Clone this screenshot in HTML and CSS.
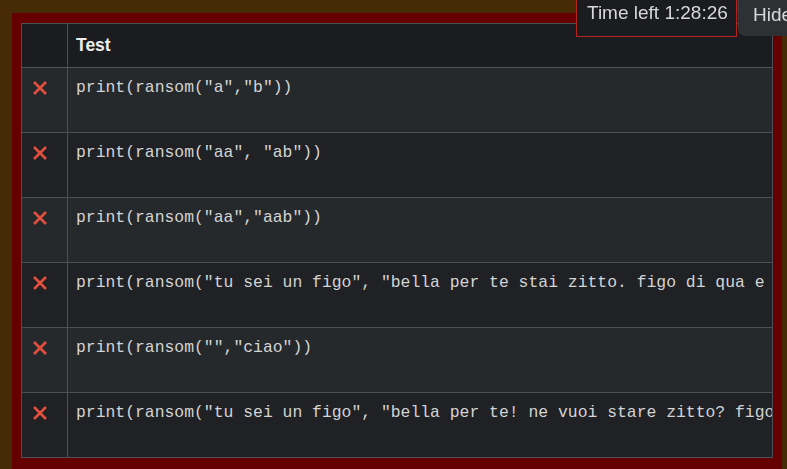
FILE: index.html
```html
<!DOCTYPE html>
<html>
<head>
<meta charset="utf-8">
<link rel="stylesheet" href="styles.css">
</head>
<body>
<div class="frame">
  <div class="table-wrap">
    <table class="results">
      <thead>
        <tr><th class="status"></th><th>Test</th></tr>
      </thead>
      <tbody>
        <tr><td class="status"><svg class="x" viewBox="0 0 16 16"><path d="M2 2L14 14M14 2L2 14"/></svg></td><td class="code">print(ransom("a","b"))</td></tr>
        <tr><td class="status"><svg class="x" viewBox="0 0 16 16"><path d="M2 2L14 14M14 2L2 14"/></svg></td><td class="code">print(ransom("aa", "ab"))</td></tr>
        <tr><td class="status"><svg class="x" viewBox="0 0 16 16"><path d="M2 2L14 14M14 2L2 14"/></svg></td><td class="code">print(ransom("aa","aab"))</td></tr>
        <tr><td class="status"><svg class="x" viewBox="0 0 16 16"><path d="M2 2L14 14M14 2L2 14"/></svg></td><td class="code">print(ransom("tu sei un figo", "bella per te stai zitto. figo di qua e figo di la"))</td></tr>
        <tr><td class="status"><svg class="x" viewBox="0 0 16 16"><path d="M2 2L14 14M14 2L2 14"/></svg></td><td class="code">print(ransom("","ciao"))</td></tr>
        <tr><td class="status"><svg class="x" viewBox="0 0 16 16"><path d="M2 2L14 14M14 2L2 14"/></svg></td><td class="code">print(ransom("tu sei un figo", "bella per te! ne vuoi stare zitto? figo di qua"))</td></tr>
      </tbody>
    </table>
  </div>
</div>
<div class="timer-bar">
  <div class="timer">Time left 1:28:26</div>
  <div class="hide-btn">Hide</div>
</div>
</body>
</html>
```

FILE: styles.css
```css
html, body {
  margin: 0;
  padding: 0;
}
body {
  background: #462b06;
  padding: 13px 5px 0 12px;
  font-family: "Liberation Sans", Arial, sans-serif;
  overflow: hidden;
  height: 469px;
  box-sizing: border-box;
}
.frame {
  background: #660000;
  padding: 10px 9px 20px 9px;
}
.table-wrap {
  overflow: hidden;
  border: 1px solid #4b5056;
}
.results {
  border-collapse: collapse;
  width: 100%;
  table-layout: fixed;
}
.results th {
  background: #1b1c1f;
  color: #ececec;
  font-weight: bold;
  font-size: 17.5px;
  text-align: left;
  height: 43px;
  padding: 0 8px;
  border-bottom: 1px solid #50565c;
  border-left: 1px solid #4b5056;
}
.results th.status, .results td.status {
  width: 29px;
  border-left: none;
}
.results td {
  vertical-align: top;
  border-top: 1px solid #4b5056;
  border-left: 1px solid #4b5056;
}
.results thead + tbody tr:first-child td {
  border-top: none;
}
.results tbody tr:nth-child(odd) td {
  background: #26292c;
}
.results tbody tr:nth-child(even) td {
  background: #1f2124;
}
.results td.code {
  font-family: "Liberation Mono", "DejaVu Sans Mono", monospace;
  font-size: 16.4px;
  color: #d4d4d4;
  white-space: nowrap;
  overflow: hidden;
  padding: 10px 8px 0 8px;
  height: 54px;
  line-height: 20px;
}
.results td.status {
  padding: 12px 0 0 10px;
  height: 52px;
}
.x {
  width: 16px;
  height: 16px;
  display: block;
}
.x path {
  stroke: #e24f3d;
  stroke-width: 2.6;
  fill: none;
}
.timer-bar {
  position: fixed;
  top: 0;
  left: 576px;
  display: flex;
  align-items: flex-start;
  gap: 1px;
}
.timer {
  background: #1b1c1f;
  border: 1px solid #b5231c;
  border-top: none;
  color: #d8d8d8;
  font-size: 19px;
  height: 37px;
  box-sizing: border-box;
  padding: 2px 0 0 10px;
  width: 161px;
  line-height: 22px;
  white-space: nowrap;
}
.hide-btn {
  background: #2e3134;
  color: #d8d8d8;
  font-size: 19px;
  height: 36px;
  box-sizing: border-box;
  padding: 4px 14px 0 14px;
  line-height: 22px;
  border-bottom-left-radius: 8px;
  border-left: 1px solid #3a3d41;
}
```
